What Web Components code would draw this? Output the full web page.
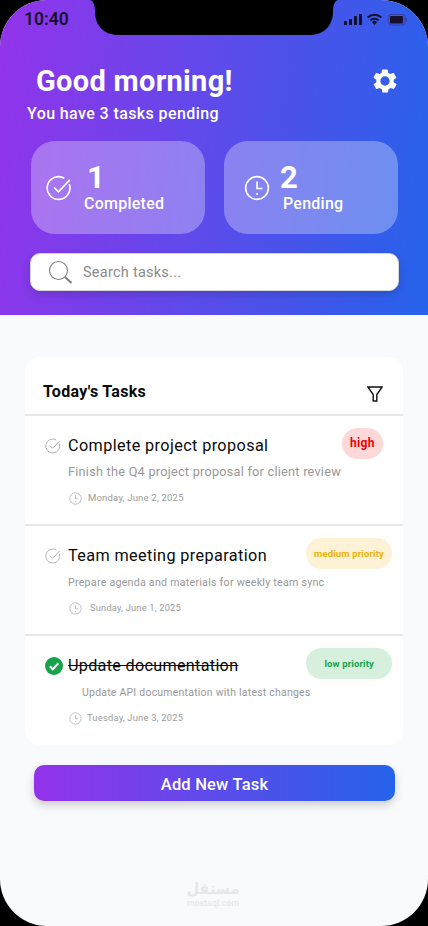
<!DOCTYPE html>
<html lang="en">
<head>
<meta charset="utf-8">
<title>Tasks</title>
<style>
	html, body {
		margin: 0;
		background: #000;
	}

	body {
		width: 428px;
		height: 926px;
		overflow: hidden;
		font-family: Roboto, "Liberation Sans", sans-serif;
	}
</style>
</head>
<body>

<task-screen>
	<task-header slot="header" tasks="3" completed="1" pending="2"></task-header>
	<task-list>
		<task-item style="--text-size: 12.7px; --date-size: 9.5px; --date-gap: 6px; --text-top: 7px; --date-top: 11px" title="Complete project proposal" text="Finish the Q4 project proposal for client review" date="Monday, June 2, 2025" priority="high" label="high"></task-item>
		<task-item style="--text-size: 10.65px; --date-size: 9.3px; --date-gap: 8px; --text-top: 8px; --date-top: 10px" title="Team meeting preparation" text="Prepare agenda and materials for weekly team sync" date="Sunday, June 1, 2025" priority="medium" label="medium priority"></task-item>
		<task-item style="--text-size: 10.45px; --date-size: 9.4px; --date-gap: 5px; --text-top: 8px; --date-top: 10px" title="Update documentation" text="Update API documentation with latest changes" date="Tuesday, June 3, 2025" priority="low" label="low priority" done></task-item>
	</task-list>
	<add-button>Add New Task</add-button>
</task-screen>

<script>
	const CLOCK = `<circle cx="12" cy="12" r="10.5"/><path d="M12 6v6.5h5M11 17.5h2"/>`;
	const CHECK = `<path d="M21.5 8.5A10.5 10.5 0 1 1 17 3"/><path d="M7.5 11.5l4 4L22 4.5"/>`;

	class TaskScreen extends HTMLElement {
		constructor() {
			super();
			this.attachShadow({ mode: "open" });
			this.shadowRoot.innerHTML = `
				<style>
					:host {
						display: flex;
						flex-direction: column;
						position: relative;
						width: 428px;
						height: 926px;
						overflow: hidden;
						background: #f9fafb;
						border-radius: 47px;
					}
					.bar {
						position: absolute;
						left: 0;
						top: 0;
						right: 0;
						height: 35px;
					}
					.notch {
						position: absolute;
						left: 0;
						top: 0;
					}
					.time {
						position: absolute;
						left: 24px;
						top: 8px;
						font: 600 17.5px/22px Roboto, sans-serif;
						color: #16122e;
					}
					.status {
						position: absolute;
						left: 344px;
						top: 13px;
					}
					main {
						display: flex;
						flex-direction: column;
						padding: 42px 25px 0;
					}
					.mark {
						position: absolute;
						left: 183px;
						top: 880px;
						width: 60px;
						color: #e6e7e9;
						text-align: center;
					}
					.mark b {
						display: block;
						height: 18px;
						font: 700 16px/18px "DejaVu Sans", sans-serif;
						white-space: nowrap;
						transform: scaleX(.9);
					}
					.mark span {
						display: block;
						margin-top: 1px;
						font: 500 8.5px/9px Roboto, sans-serif;
						letter-spacing: .2px;
					}
				</style>
				<slot name="header"></slot>
				<main><slot></slot></main>
				<div class="bar">
					<svg class="notch" width="428" height="35" viewBox="0 0 428 35">
						<path fill="#000" d="M90 0C93.500 1 95 5 95 12C95 26 105 35 118 35H310C323 35 333 26 333 12C333 5 334.500 1 338 0Z"/>
					</svg>
					<div class="time">10:40</div>
					<svg class="status" width="64" height="13" viewBox="0 0 64 13">
						<g fill="#16122e">
							<rect x="0" y="8" width="3" height="4" rx=".6"/>
							<rect x="5" y="6" width="3" height="6" rx=".6"/>
							<rect x="10" y="3" width="3" height="9" rx=".6"/>
							<rect x="15" y="1" width="3" height="11" rx=".6"/>
							<path d="M30.500 12l-2.600-2.800a3.600 3.600 0 0 1 5.200 0z"/>
							<rect x="46" y="3" width="13" height="7.500" rx="1"/>
							<rect x="61.500" y="5" width="1.500" height="3.500" rx=".7" fill="#3a3aa8"/>
						</g>
						<g fill="none" stroke="#16122e" stroke-width="1.900">
							<path d="M26.300 7.400a6 6 0 0 1 8.400 0"/>
							<path d="M23.600 4.500a10 10 0 0 1 13.800 0"/>
						</g>
						<rect x="44.500" y="1.500" width="16.500" height="10.500" rx="2.500" fill="none" stroke="#3a3aa8" stroke-width="1"/>
					</svg>
				</div>
				<div class="mark"><b dir="rtl">مستقل</b><span>mostaql.com</span></div>
			`;
		}
	}

	class TaskHeader extends HTMLElement {
		constructor() {
			super();
			this.attachShadow({ mode: "open" });
			this.shadowRoot.innerHTML = `
				<style>
					:host {
						display: flex;
						flex-direction: column;
						box-sizing: border-box;
						height: 315px;
						padding: 63px 30px 0;
						background: linear-gradient(97deg, #9333ea, #2563eb);
						color: #fff;
					}
					.top {
						display: flex;
						justify-content: space-between;
						align-items: center;
						height: 36px;
						padding: 0 0 0 6px;
					}
					h1 {
						margin: 0;
						font: 700 29px/36px Roboto, sans-serif;
						letter-spacing: .3px;
					}
					.gear {
						margin-right: -1px;
					}
					p {
						margin: 4px 0 0 -3px;
						font: 500 16px/22px Roboto, sans-serif;
						letter-spacing: .4px;
					}
					.stats {
						display: grid;
						grid-template-columns: 174px 174px;
						gap: 19px;
						margin: 16px 0 0 1px;
					}
					.stat {
						display: flex;
						align-items: center;
						gap: 12px;
						height: 93px;
						padding-left: 15px;
						border-radius: 24px;
						background: rgba(255, 255, 255, .3);
					}
					.stat svg {
						flex: none;
						fill: none;
						stroke: #fff;
						stroke-width: 1.500;
					}
					.num {
						font: 700 31px/32px Roboto, sans-serif;
					}
					.one {
						margin-left: 3px;
					}
					.two {
						margin-left: -3px;
					}
					.name {
						font: 500 16px/20px Roboto, sans-serif;
						letter-spacing: .25px;
					}
					.pending {
						margin-left: 1px;
					}
					.search {
						display: flex;
						align-items: center;
						gap: 10px;
						box-sizing: border-box;
						height: 38px;
						margin: 19px -1px 0 0;
						padding-left: 17px;
						background: #fff;
						border: 1px solid #d6d6da;
						border-radius: 10px;
						box-shadow: 0 4px 8px rgba(0, 0, 0, .14);
						color: #8b8b8b;
						font: 400 14.500px/20px Roboto, sans-serif;
						letter-spacing: .25px;
					}
					.search span {
						padding-top: 2px;
					}
				</style>
				<div class="top">
					<h1>Good morning!</h1>
					<svg class="gear" width="28" height="28" viewBox="0 0 24 24" fill="#fff">
						<path d="M19.400 13a7.600 7.600 0 0 0 0-2l2.100-1.600a.5.5 0 0 0 .1-.6l-2-3.500a.5.5 0 0 0-.6-.2l-2.500 1a7.300 7.300 0 0 0-1.700-1l-.4-2.600a.5.5 0 0 0-.5-.4h-4a.5.5 0 0 0-.5.4l-.4 2.600a7.300 7.300 0 0 0-1.700 1l-2.500-1a.5.5 0 0 0-.6.2l-2 3.500a.5.5 0 0 0 .1.6L4.600 11a7.600 7.600 0 0 0 0 2l-2.100 1.600a.5.5 0 0 0-.1.6l2 3.500c.1.2.4.3.6.2l2.500-1c.5.4 1.100.7 1.700 1l.4 2.600c0 .2.2.4.5.4h4c.3 0 .5-.2.5-.4l.4-2.600a7.300 7.300 0 0 0 1.700-1l2.500 1c.2.1.5 0 .6-.2l2-3.500a.5.5 0 0 0-.1-.6zM12 16a4 4 0 1 1 0-8 4 4 0 0 1 0 8z"/>
					</svg>
				</div>
				<p>You have ${this.getAttribute("tasks")} tasks pending</p>
				<div class="stats">
					<div class="stat">
						<svg width="26" height="26" viewBox="0 0 24 24">${CHECK}</svg>
						<div><div class="num one">${this.getAttribute("completed")}</div><div class="name">Completed</div></div>
					</div>
					<div class="stat">
						<svg width="26" height="26" viewBox="0 0 24 24" style="margin-left:5px">${CLOCK}</svg>
						<div class="pending"><div class="num two">${this.getAttribute("pending")}</div><div class="name">Pending</div></div>
					</div>
				</div>
				<div class="search">
					<svg width="25" height="25" viewBox="0 0 25 25" fill="none" stroke="#7c7c7c" stroke-width="1.100">
						<circle cx="10.500" cy="10.500" r="9"/>
						<path d="M17 17l6.500 6" stroke-width="2"/>
					</svg>
					<span>Search tasks...</span>
				</div>
			`;
		}
	}

	class TaskList extends HTMLElement {
		constructor() {
			super();
			this.attachShadow({ mode: "open" });
			this.shadowRoot.innerHTML = `
				<style>
					:host {
						display: block;
						background: #fff;
						border-radius: 15px;
					}
					header {
						display: flex;
						justify-content: space-between;
						align-items: center;
						box-sizing: border-box;
						height: 59px;
						padding: 13px 20px 0 18px;
						border-bottom: 2px solid #e8e8e8;
						color: #0a0a0a;
						font: 700 16px/20px Roboto, sans-serif;
						letter-spacing: .3px;
					}
					svg {
						margin-top: 3px;
					}
				</style>
				<header>
					<span>Today's Tasks</span>
					<svg width="16" height="16" viewBox="0 0 16 16" fill="none" stroke="#111" stroke-width="1.400">
						<path d="M.8 1h14.400L9.800 8.500v6.500H6.200V8.500z"/>
					</svg>
				</header>
				<slot></slot>
			`;
		}
	}

	class TaskItem extends HTMLElement {
		constructor() {
			super();
			let done = this.hasAttribute("done");
			let priority = this.getAttribute("priority");
			this.attachShadow({ mode: "open" });
			this.shadowRoot.innerHTML = `
				<style>
					:host {
						display: block;
						position: relative;
						box-sizing: border-box;
						height: 110px;
						padding: 19px 0 0 19px;
						border-bottom: 2px solid #e8e8e8;
					}
					:host(:last-child) {
						height: 109px;
						border-bottom: 0;
					}
					.row {
						display: flex;
						align-items: center;
						gap: 7px;
						height: 22px;
					}
					.row svg {
						flex: none;
					}
					h2 {
						margin: 0;
						font: 400 16.200px/22px Roboto, sans-serif;
						letter-spacing: .4px;
						color: #0a0a0a;
					}
					:host([done]) h2 {
						text-decoration: line-through;
						letter-spacing: .3px;
					}
					p {
						margin: var(--text-top) 0 0 24px;
						font: 400 var(--text-size)/16px Roboto, sans-serif;
						letter-spacing: .25px;
						color: #989898;
					}
					:host([done]) p {
						margin-left: 38px;
					}
					.date {
						display: flex;
						align-items: center;
						gap: var(--date-gap);
						margin: var(--date-top) 0 0 25px;
						font: 400 var(--date-size)/14px Roboto, sans-serif;
						letter-spacing: .2px;
						color: #9c9c9c;
					}
					.badge {
						position: absolute;
						top: 12px;
						right: 11px;
						height: 31px;
						padding: 0 8px;
						border-radius: 16px;
						font: 700 9.600px/31px Roboto, sans-serif;
						letter-spacing: .1px;
					}
					.high {
						right: 20px;
						padding: 0 8px;
						background: #fdd8d8;
						color: #f00000;
						font-size: 12px;
						letter-spacing: .4px;
					}
					.medium {
						background: #fdf2d5;
						color: #eab308;
					}
					.low {
						padding: 0 18px;
						background: #d7f0dd;
						color: #16a34a;
					}
				</style>
				<div class="row">
					${done
						? `<svg width="18" height="18" viewBox="0 0 18 18" style="margin-left:.5px;margin-right:-1.500px"><circle cx="9" cy="9" r="9" fill="#16a34a"/><path d="M4.800 9.300l3 3 5.500-6" fill="none" stroke="#fff" stroke-width="2"/></svg>`
						: `<svg width="16" height="16" viewBox="0 0 24 24" fill="none" stroke="#b5b5b5" stroke-width="1.500" style="margin-left:.5px;margin-right:.5px">${CHECK}</svg>`}
					<h2>${this.getAttribute("title")}</h2>
				</div>
				<p>${this.getAttribute("text")}</p>
				<div class="date">
					<svg width="13" height="13" viewBox="0 0 24 24" fill="none" stroke="#b5b5b5" stroke-width="1.600">${CLOCK}</svg>
					<span>${this.getAttribute("date")}</span>
				</div>
				<div class="badge ${priority}">${this.getAttribute("label")}</div>
			`;
		}
	}

	class AddButton extends HTMLElement {
		constructor() {
			super();
			this.attachShadow({ mode: "open" });
			this.shadowRoot.innerHTML = `
				<style>
					:host {
						display: flex;
						justify-content: center;
						align-items: center;
						box-sizing: border-box;
						height: 36px;
						margin: 20px 8px 0 9px;
						padding-top: 3px;
						border-radius: 10px;
						background: linear-gradient(90deg, #9333ea, #2563eb);
						box-shadow: 0 4px 8px rgba(0, 0, 0, .18);
						color: #fff;
						font: 500 16.500px/20px Roboto, sans-serif;
						letter-spacing: .2px;
					}
				</style>
				<slot></slot>
			`;
		}
	}

	customElements.define("task-screen", TaskScreen);
	customElements.define("task-header", TaskHeader);
	customElements.define("task-list", TaskList);
	customElements.define("task-item", TaskItem);
	customElements.define("add-button", AddButton);
</script>
</body>
</html>
